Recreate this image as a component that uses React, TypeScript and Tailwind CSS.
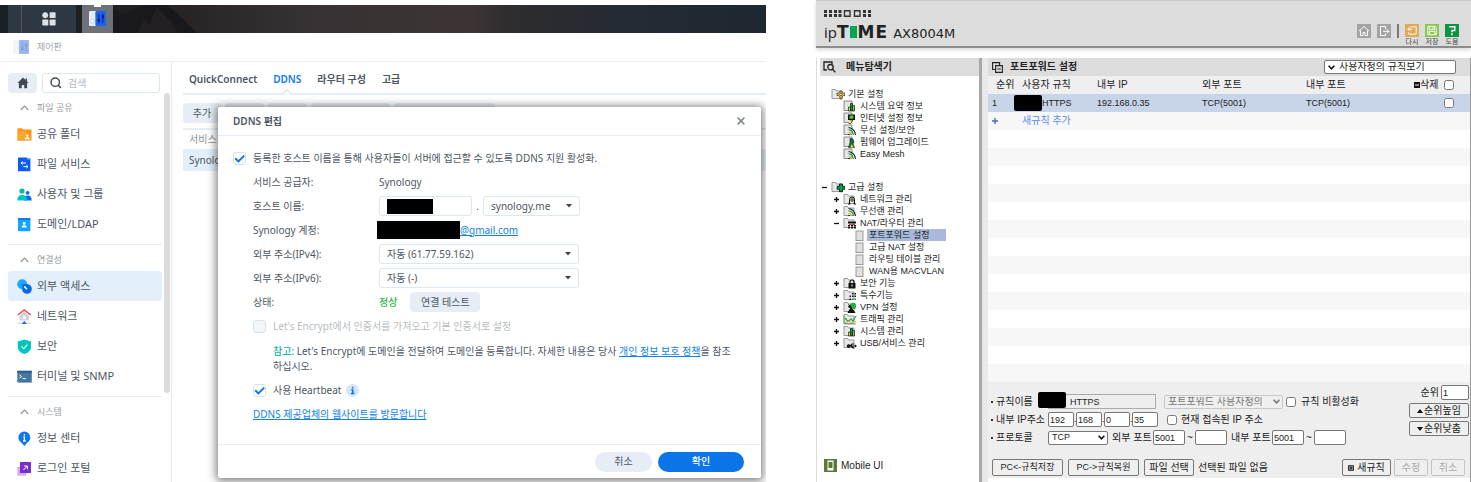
import React from "react";

type IconProps = { className?: string };

/* ---------- DSM icons ---------- */

const ControlPanelIcon = ({ className }: IconProps) => (
  <svg viewBox="0 0 16 16" className={className} aria-hidden="true">
    <rect x="0" y="1" width="8" height="14" rx="1" fill="#e4ecf8" />
    <rect x="6" y="1" width="10" height="14" rx="1" fill="#1b62f0" />
    <circle cx="3.2" cy="10.5" r="1.8" fill="#fff" stroke="#b6c3d6" strokeWidth="0.6" />
    <path d="M9.3 3.5v9M13 3.5v9" stroke="#0a2f9c" strokeWidth="1.2" />
    <rect x="8.2" y="8.5" width="2.2" height="2.2" fill="#0d1f66" />
    <rect x="11.9" y="5" width="2.2" height="2.2" fill="#0d1f66" />
  </svg>
);

const AppsIcon = ({ className }: IconProps) => (
  <svg viewBox="0 0 14 14" className={className} fill="#dde1e5" aria-hidden="true">
    <path d="M3.2 0 6.4 3.2 3.2 6.4 0 3.2z" />
    <rect x="0.6" y="0.6" width="5.2" height="5.2" rx="1.6" />
    <rect x="7.6" y="0.3" width="6" height="5.8" rx="0.6" />
    <rect x="0.3" y="7.6" width="6" height="5.8" rx="0.6" />
    <rect x="7.6" y="7.6" width="6" height="5.8" rx="0.6" />
  </svg>
);

const HomeIcon = ({ className }: IconProps) => (
  <svg viewBox="0 0 12 12" className={className} fill="#414b55" aria-hidden="true">
    <path d="M6 .6 .4 6h1.5v5.2h2.9V8h2.4v3.2h2.9V6h1.5L10 4.4V1.4H8.6v1.7z" />
  </svg>
);

const SearchIcon = ({ className }: IconProps) => (
  <svg viewBox="0 0 12 12" className={className} fill="none" stroke="#414b55" aria-hidden="true">
    <circle cx="5.2" cy="5.2" r="4.2" strokeWidth="1.4" />
    <path d="m8.3 8.3 2.6 2.6" strokeWidth="1.6" />
  </svg>
);

const FolderIcon = ({ className }: IconProps) => (
  <svg viewBox="0 0 15 15" className={className} aria-hidden="true">
    <path d="M.5 1.2h4.6l1.2 1.3h8.2V13.6H.5z" fill="#ff9416" />
    <path d="M.5 4h8.500V13.6H.5z" fill="#ffa62e" />
    <circle cx="10.4" cy="8.6" r="1.3" fill="#fff" />
    <path d="M7.8 12.2c0-1.6 1.2-2 2.6-2s2.6.4 2.6 2z" fill="#fff" />
  </svg>
);

const FileServiceIcon = ({ className }: IconProps) => (
  <svg viewBox="0 0 15 15" className={className} aria-hidden="true">
    <path d="M1 .6h8.6l1 1.600h2.800v12H1z" fill="#0a5cf5" />
    <path d="M10 1.2l3.400 0v1.600h-2.600z" fill="#0aa0ff" />
    <path d="M4 6h5M4 6l1.6-1.6M4 6l1.6 1.4M11 9.6H6.4M11 9.6 9.4 8.2M11 9.6 9.4 11" stroke="#fff" fill="none" />
  </svg>
);

const UsersIcon = ({ className }: IconProps) => (
  <svg viewBox="0 0 15 15" className={className} aria-hidden="true">
    <circle cx="10.6" cy="5.8" r="1.9" fill="#0a6cf5" />
    <path d="M7 13.4c0-3.6 1.6-4.8 3.8-4.8s3.8 1.2 3.8 4.8z" fill="#0a6cf5" />
    <circle cx="5" cy="4" r="2.6" fill="#00b8a5" />
    <path d="M.4 13.4c0-4 1.8-5.4 4.8-5.4S10 9.4 10 13.4z" fill="#00c5c0" />
  </svg>
);

const DomainIcon = ({ className }: IconProps) => (
  <svg viewBox="0 0 15 15" className={className} aria-hidden="true">
    <rect x="1" y="1.2" width="12.4" height="13" rx="0.6" fill="#12a4ff" />
    <rect x="1" y="1.2" width="12.4" height="1.6" fill="#0b6fe0" />
    <circle cx="7.2" cy="6.4" r="1.4" fill="#fff" />
    <path d="M4.6 10.6c0-2 1.2-2.4 2.6-2.4s2.6.4 2.6 2.4z" fill="#fff" />
  </svg>
);

const ExternalIcon = ({ className }: IconProps) => (
  <svg viewBox="0 0 15 15" className={className} aria-hidden="true">
    <circle cx="5.2" cy="5.2" r="5" fill="#19a9ff" />
    <path d="M5.400 5.200 10 5a5 5 0 0 1 4.800 5A4.800 4.800 0 0 1 10 14.800 5 5 0 0 1 5.200 11z" fill="#0667f2" />
    <path d="m7.200 7.4 2.800 2.800" stroke="#fff" strokeWidth="1.500" />
  </svg>
);

const NetworkIcon = ({ className }: IconProps) => (
  <svg viewBox="0 0 15 15" className={className} aria-hidden="true">
    <path d="M2.6 6.4 7.3 2.6 12 6.400V11.400H2.600z" fill="#cfd4da" />
    <rect x="5.8" y="7.2" width="3" height="3" fill="#fff" />
    <path d="m.8 6 6.500-5 6.500 5" fill="none" stroke="#f04a45" strokeWidth="1.500" />
    <path d="M.8 14.200h13" stroke="#cfd4da" strokeWidth="1.200" />
    <path d="M4.800 15 7.300 12 9.800 15z" fill="#0667f2" />
  </svg>
);

const ShieldIcon = ({ className }: IconProps) => (
  <svg viewBox="0 0 15 15" className={className} aria-hidden="true">
    <path d="M7.300.4 14 2.600V8c0 3.400-3 5.800-6.700 7C3.600 13.800.8 11.400.8 8V2.600z" fill="#00c4c0" />
    <path d="m4.400 7.400 2.200 2.200 3.800-4" fill="none" stroke="#fff" strokeWidth="1.100" />
  </svg>
);

const TerminalIcon = ({ className }: IconProps) => (
  <svg viewBox="0 0 15 15" className={className} aria-hidden="true">
    <rect x="0.300" y="1.800" width="14.500" height="11.800" fill="#4377a3" />
    <rect x="0.300" y="1.800" width="14.500" height="2" fill="#2f5f8a" />
    <path d="m2.400 5.800 2.200 1.700-2.200 1.700M5.400 9.600h3.400" fill="none" stroke="#fff" strokeWidth="1" />
  </svg>
);

const InfoPinIcon = ({ className }: IconProps) => (
  <svg viewBox="0 0 15 15" className={className} aria-hidden="true">
    <path d="M7.300.4a6 6 0 0 1 6 6c0 3.400-2.800 4.800-3.800 6L7.300 15 5.200 12.400c-1-1.200-3.800-2.600-3.800-6A6 6 0 0 1 7.300.4z" fill="#0a76f5" />
    <path d="M7.400 3v1.500M6.400 6h1v4M6 10h2.800" stroke="#fff" strokeWidth="1.300" fill="none" />
  </svg>
);

const LoginPortalIcon = ({ className }: IconProps) => (
  <svg viewBox="0 0 15 15" className={className} aria-hidden="true">
    <rect x="0.400" y="6" width="9" height="8.600" fill="#d8a8f5" />
    <rect x="3" y="1" width="11" height="11" fill="#7a2fc9" />
    <path d="m6.400 9 3.800-3.800M7.200 5h3.200v3.200" stroke="#fff" fill="none" />
  </svg>
);

const ChevronUp = ({ className }: IconProps) => (
  <svg viewBox="0 0 9 6" className={className} fill="none" stroke="#8b949d" strokeWidth="1.200" aria-hidden="true">
    <path d="M.8 5 4.500 1.200 8.200 5" />
  </svg>
);

/* ---------- DSM building blocks ---------- */

type MenuItem = { label: string; icon: (p: IconProps) => React.JSX.Element; active?: boolean };

const sections: { title: string; items: MenuItem[] }[] = [
  {
    title: "파일 공유",
    items: [
      { label: "공유 폴더", icon: FolderIcon },
      { label: "파일 서비스", icon: FileServiceIcon },
      { label: "사용자 및 그룹", icon: UsersIcon },
      { label: "도메인/LDAP", icon: DomainIcon },
    ],
  },
  {
    title: "연결성",
    items: [
      { label: "외부 액세스", icon: ExternalIcon, active: true },
      { label: "네트워크", icon: NetworkIcon },
      { label: "보안", icon: ShieldIcon },
      { label: "터미널 및 SNMP", icon: TerminalIcon },
    ],
  },
  {
    title: "시스템",
    items: [
      { label: "정보 센터", icon: InfoPinIcon },
      { label: "로그인 포털", icon: LoginPortalIcon },
    ],
  },
];

function Sidebar() {
  return (
    <aside className="flex w-[172px] shrink-0 border-r border-[#dfeaf2] pl-2 pt-[11px]">
      <div className="flex-1">
        <div className="flex gap-[5px]">
          <button aria-label="홈" className="grid h-5 w-[29px] shrink-0 place-items-center rounded-sm bg-[#e6edf4]">
            <HomeIcon className="size-3" />
          </button>
          <label className="flex h-5 w-[118px] shrink-0 items-center gap-1 rounded-[3px] border border-[#dce7f0] px-[7px]">
            <SearchIcon className="size-3 shrink-0" />
            <input
              aria-label="검색"
              placeholder="검색"
              className="w-full min-w-0 px-[2px] text-[10px] outline-none placeholder:text-[#b3b9bf]"
            />
          </label>
        </div>
        {sections.map((s, i) => (
          <section key={s.title} className={i === 0 ? "" : "mt-[5px] border-t border-[#e3ecf3]"}>
            <h2 className="flex h-[26px] items-center pl-3 pt-[3px] text-[9px] text-[#959ca3]">
              <ChevronUp className="mr-2 h-[6px] w-[9px]" />
              {s.title}
            </h2>
            {s.items.map(({ label, icon: Icon, active }) => (
              <a
                key={label}
                href="#"
                className={
                  active
                    ? "flex h-[30px] items-center gap-[5px] rounded-[3px] bg-[#e3effb] pl-[9px] text-[11px]"
                    : "flex h-[30px] items-center gap-[5px] pl-[9px] text-[11px]"
                }
              >
                <Icon className="size-[15px]" />
                {label}
              </a>
            ))}
          </section>
        ))}
      </div>
      <div className="mt-5 h-[300px] w-[9px] pl-[2px]">
        <div className="h-full w-[6px] rounded-full bg-[#dcdcdc]" />
      </div>
    </aside>
  );
}

function CheckBox({ id, checked, disabled }: { id: string; checked?: boolean; disabled?: boolean }) {
  return (
    <span className="grid size-[13px] shrink-0">
      <input
        id={id}
        type="checkbox"
        defaultChecked={checked}
        disabled={disabled}
        className="col-start-1 row-start-1 size-[13px] appearance-none rounded-[3px] border border-[#d5e2ee] bg-white disabled:bg-[#f3f6f9]"
      />
      {checked && (
        <svg viewBox="0 0 13 13" className="pointer-events-none col-start-1 row-start-1" fill="none">
          <path d="m2.200 6.300 3.200 3.100 5.800-5.800" stroke="#0a73e8" strokeWidth="1.900" />
        </svg>
      )}
    </span>
  );
}

function DsmSelect({ id, label, value, className }: { id: string; label: string; value: string; className: string }) {
  return (
    <span className={"grid " + className}>
      <select
        id={id}
        aria-label={label}
        className="col-start-1 row-start-1 h-5 w-full appearance-none rounded-[3px] border border-[#dce7f0] bg-white pl-[7px] text-[10px] text-[#4d565f]"
      >
        <option>{value}</option>
      </select>
      <svg viewBox="0 0 6 4" className="pointer-events-none col-start-1 row-start-1 mr-2 h-1 w-[6px] self-center justify-self-end">
        <path d="M0 0h6L3 3.600z" fill="#3d4650" />
      </svg>
    </span>
  );
}

function FormRow({ label, htmlFor, children }: { label: string; htmlFor?: string; children: React.ReactNode }) {
  return (
    <div className="flex h-6 items-center pl-5">
      <label htmlFor={htmlFor} className="w-[126px] shrink-0">
        {label}
      </label>
      {children}
    </div>
  );
}

function DdnsDialog() {
  return (
    <div
      role="dialog"
      aria-label="DDNS 편집"
      className="absolute left-[218px] right-[5px] top-[107px] rounded-[2px] bg-white text-[10px] shadow-[0_1px_9px_2px_rgba(0,0,0,0.5)]"
    >
      <header className="flex h-[29px] items-center justify-between border-b border-[#e6edf3] pl-[15px] pr-4">
        <h2 className="font-semibold">DDNS 편집</h2>
        <button aria-label="닫기" className="grid size-2">
          <svg viewBox="0 0 8 8" className="size-2" stroke="#828b94" strokeWidth="1.600">
            <path d="m.6.6 6.800 6.800M7.400.6.6 7.400" />
          </svg>
        </button>
      </header>
      <div className="pb-[18px] pl-[15px] pr-3 pt-[10px]">
        <div className="flex h-6 items-center gap-[7px]">
          <CheckBox id="ddns-enable" checked />
          <label htmlFor="ddns-enable">등록한 호스트 이름을 통해 사용자들이 서버에 접근할 수 있도록 DDNS 지원 활성화.</label>
        </div>
        <FormRow label="서비스 공급자:">Synology</FormRow>
        <FormRow label="호스트 이름:" htmlFor="hostname">
          <span className="grid w-[93px]">
            <input id="hostname" className="col-start-1 row-start-1 h-5 w-full rounded-[3px] border border-[#dce7f0] px-2" />
            <span className="col-start-1 row-start-1 ml-2 h-[15px] w-[46px] self-center bg-black" />
          </span>
          <span className="w-[11px] text-center">.</span>
          <DsmSelect id="domain" label="도메인" value="synology.me" className="w-[97px]" />
        </FormRow>
        <FormRow label="Synology 계정:">
          <span className="-ml-[2px] h-[18px] w-[83px] bg-black" />
          <a href="#" className="text-[#0f82e6] underline">
            @gmail.com
          </a>
        </FormRow>
        <FormRow label="외부 주소(IPv4):" htmlFor="ipv4">
          <DsmSelect id="ipv4" label="외부 주소(IPv4)" value="자동 (61.77.59.162)" className="w-[200px]" />
        </FormRow>
        <FormRow label="외부 주소(IPv6):" htmlFor="ipv6">
          <DsmSelect id="ipv6" label="외부 주소(IPv6)" value="자동 (-)" className="w-[200px]" />
        </FormRow>
        <FormRow label="상태:">
          <span className="font-medium text-[#1fb83a]">정상</span>
          <button className="ml-[13px] h-5 w-[70px] rounded-sm bg-[#e6edf4]">연결 테스트</button>
        </FormRow>
        <div className="flex h-6 items-center gap-[7px] pl-5 text-[#b7bcc1]">
          <CheckBox id="lets-encrypt" disabled />
          <label htmlFor="lets-encrypt">Let's Encrypt에서 인증서를 가져오고 기본 인증서로 설정</label>
        </div>
        <p className="mb-1 mt-[6px] pl-10 leading-[15px]">
          <span className="font-medium text-[#0fb5a5]">참고:</span> Let's Encrypt에 도메인을 전달하여 도메인을 등록합니다. 자세한 내용은 당사{" "}
          <a href="#" className="text-[#0f82e6] underline">
            개인 정보 보호 정책
          </a>
          을 참조
          <br />
          하십시오.
        </p>
        <div className="flex h-6 items-center gap-[7px] pl-5">
          <CheckBox id="heartbeat" checked />
          <label htmlFor="heartbeat">사용 Heartbeat</label>
          <svg viewBox="0 0 13 13" className="-ml-[2px] size-[13px]">
            <circle cx="6.500" cy="6.500" r="6.500" fill="#d3e7fb" />
            <path d="M6.600 2.800v1.700M5.200 5.900h1.500v3.500M5 9.500h3.400" stroke="#0a73e8" strokeWidth="1.500" fill="none" />
          </svg>
        </div>
        <div className="flex h-6 items-center pl-5">
          <a href="#" className="text-[#0f82e6] underline">
            DDNS 제공업체의 웹사이트를 방문합니다
          </a>
        </div>
      </div>
      <footer className="flex h-[34px] items-center justify-end gap-[6px] border-t border-[#e6edf3] pr-[17px]">
        <button className="h-5 w-[57px] rounded-full bg-[#e6edf4]">취소</button>
        <button className="h-5 w-[86px] rounded-full bg-[#0a74e8] font-medium text-white">확인</button>
      </footer>
    </div>
  );
}

function DsmWindow() {
  return (
    <section className="relative flex min-w-0 flex-[766] flex-col overflow-hidden pt-[5px] font-['Noto_Sans','Noto_Sans_CJK_KR',sans-serif] text-[10px] text-[#4d565f]">
      <div className="flex h-7 shrink-0 bg-[linear-gradient(90deg,#1a2027_0%,#1f1f22_16%,#2a2527_26%,#363133_40%,#3d3534_61%,#2e2c2f_67%,#252b32_80%,#1d2831_100%)] pl-2">
        <button aria-label="메인 메뉴" className="grid w-[68px] shrink-0 grid-cols-[14px_1fr] bg-[#2d3842]">
          <span className="h-full border-r border-[#505a63]" />
          <AppsIcon className="size-[14px] place-self-center" />
        </button>
        <button aria-label="제어판" className="ml-[6px] flex w-[31px] shrink-0 flex-col items-center bg-[#6c7278]">
          <span className="h-[2px] w-[7px] bg-white" />
          <ControlPanelIcon className="mt-[3px] size-[17px]" />
        </button>
        <svg viewBox="0 0 84 28" className="h-7 w-[84px]" aria-hidden="true">
          <path d="M0 4 10 9 22 3 36 0H54L66 10 84 28H0z" fill="#19191d" />
          <path d="m24 28 8-14 4 6 8-17 14 14 6 11z" fill="#232024" />
        </svg>
      </div>
      <header className="flex h-[29px] shrink-0 items-center gap-2 border-b border-[#eaeff3] pl-[13px] text-[9px] text-[#a3a8ad]">
        <ControlPanelIcon className="size-4 opacity-45" />
        <h1>제어판</h1>
      </header>
      <div className="flex flex-1">
        <Sidebar />
        <div className="min-w-0 flex-1 pl-[11px]">
          <nav className="flex h-[33px] items-center gap-4 border-b-2 border-[#e6eef5] pl-[6px] pt-1 text-[10px] font-semibold">
            <a href="#">QuickConnect</a>
            <a href="#" className="relative text-[#0a7cf0]">
              DDNS
              <svg viewBox="0 0 10 6" className="absolute -bottom-[8px] left-[9px] h-[6px] w-[10px]">
                <path d="M0 5.500 5 .8l5 4.700" fill="#fff" stroke="#dce7f0" strokeWidth="1.400" />
              </svg>
            </a>
            <a href="#">라우터 구성</a>
            <a href="#">고급</a>
          </nav>
          <div className="flex gap-1 pb-[5px] pt-2">
            <button className="h-5 w-[38px] rounded-sm bg-[#e6edf4]">추가</button>
            <span className="h-5 w-[39px] rounded-sm bg-[#e6edf4]" />
            <span className="h-5 w-[39px] rounded-sm bg-[#e6edf4]" />
            <span className="h-5 w-[79px] rounded-sm bg-[#e6edf4]" />
            <span className="h-5 w-[101px] rounded-sm bg-[#e6edf4]" />
          </div>
          <table className="w-full border-separate border-spacing-0 border-t-2 border-[#e6eef5] text-left">
            <thead>
              <tr className="h-[19px]">
                <th className="pl-[6px] font-normal text-[#8b939b]">서비스</th>
              </tr>
            </thead>
            <tbody>
              <tr className="h-[22px] bg-[#e3effb]">
                <td className="pl-[6px]">Synology</td>
              </tr>
            </tbody>
          </table>
        </div>
      </div>
      <DdnsDialog />
    </section>
  );
}

/* ---------- Router admin ---------- */

type Glyph =
  | "gear" | "bars" | "monitor" | "wifi" | "upgrade" | "plus" | "lan" | "nat"
  | "page" | "lock" | "grid" | "vpn" | "traffic" | "usb";

const glyphs: Record<Glyph, React.ReactNode> = {
  gear: (
    <g stroke="#333" strokeWidth="0.700">
      <path d="M9 3h2v1.500l1.500.5H14v2.500h-1.500L11 9v2H9V9L7.500 7.500H6V5h1.500L9 4.500z" fill="#f2b233" />
      <circle cx="10" cy="6.500" r="1.200" fill="#fff" />
    </g>
  ),
  plus: <path d="M8.500 3h3v2.300h2.200v3h-2.200v2.400h-3V8.300H6.200v-3h2.300z" fill="#00a33f" stroke="#111" strokeWidth="0.900" />,
  bars: (
    <g stroke="#111" strokeWidth="0.700">
      <path d="M5.500 7h2v4h-2z" fill="#f4e04a" />
      <path d="M7.500 3.500h2V11h-2z" fill="#00a33f" />
      <path d="M9.500 5.500h2V11h-2z" fill="#7bd04a" />
    </g>
  ),
  monitor: (
    <g>
      <rect x="5" y="2.500" width="7" height="5.500" fill="#111" />
      <rect x="6.500" y="3.500" width="4" height="3.200" fill="#5fc04a" />
      <path d="M7 8h3l-2 3.500H5.500" fill="#f4e04a" stroke="#111" strokeWidth="0.600" />
    </g>
  ),
  wifi: (
    <g fill="none" strokeWidth="1.100">
      <path d="M5.500 3.500a8 8 0 0 1 7 7.500" stroke="#222" />
      <path d="M5.500 5.700a5.500 5.500 0 0 1 4.800 5.300" stroke="#00a33f" />
      <path d="M5.500 8a3 3 0 0 1 2.600 3" stroke="#d8b92f" />
      <circle cx="6" cy="10.500" r="0.800" fill="#222" stroke="none" />
    </g>
  ),
  upgrade: (
    <g>
      <path d="M7 2.500 10 3l1 3-1 2 1.500 3.500h-6L7 7z" fill="#0b7a35" stroke="#111" strokeWidth="0.600" />
      <path d="m8.500 8 2 3.500h-3z" fill="#f4e04a" />
    </g>
  ),
  lan: (
    <g fill="none" stroke="#111">
      <path d="M6.500 11V6.500A2.500 2.500 0 0 1 9 4a2.500 2.500 0 0 1 2.500 2.500V11M5 11h2.500M10.500 11H13" />
      <circle cx="9" cy="7" r="1.300" fill="#e8b34a" strokeWidth="0.700" />
    </g>
  ),
  nat: (
    <g fill="#111">
      <path d="M5 4.500h8v2H5zM5 8h2v1H5zM8 8h2v1H8zM11 8h2v1h-2zM5 9.500h2v2H5zM8 9.500h2v2H8zM11 9.500h2v2h-2z" />
      <path d="M6 7h6v.8H6z" fill="#b03030" />
    </g>
  ),
  page: null,
  lock: (
    <g>
      <path d="M7 6V5a2 2 0 0 1 4 0v1" fill="none" stroke="#111" strokeWidth="1.200" />
      <rect x="5.500" y="6" width="7" height="5.500" fill="#111" />
      <path d="M9 7.500v2" stroke="#fff" />
    </g>
  ),
  grid: (
    <g fill="#111">
      <path d="M9 4h1.500v1.500H9zM11.500 4H13v1.500h-1.500zM6.500 6.500H8V8H6.500zM9 6.500h1.500V8H9zM11.500 6.500H13V8h-1.500zM6.500 9.500H8V11H6.500z" />
      <path d="M9 9.500h1.500V11H9zM11.500 9.500H13V11h-1.500z" fill="#00a33f" />
    </g>
  ),
  vpn: (
    <g>
      <circle cx="10" cy="5" r="3.200" fill="#22b04a" />
      <path d="m5.500 3.500 3 3.500M5 11.500l3-4.500 4 4.500z" fill="#111" stroke="#111" />
      <circle cx="6.800" cy="5.500" r="1.500" fill="#111" />
    </g>
  ),
  traffic: (
    <g fill="none">
      <path d="M1 2v9h12" stroke="#7da07d" />
      <path d="m2 5 3 3.500 3-2.500 2 2 3-5" stroke="#22a04a" strokeWidth="1.200" />
      <path d="m2 9.500 4-1 3 1 4-1" stroke="#e0a94a" />
    </g>
  ),
  usb: (
    <g stroke="#111" fill="none" strokeWidth="1.100">
      <path d="M5 9h8M7 9l2-2h2M8 9l2 2h1.500" />
      <circle cx="5.600" cy="9" r="1.300" fill="#111" />
      <path d="m12 7.500 2 1.500-2 1.500z" fill="#111" stroke="none" />
    </g>
  ),
};

function TreeIcon({ glyph, boxed }: { glyph: Glyph; boxed?: boolean }) {
  if (glyph === "page") {
    return (
      <svg viewBox="0 0 9 11" className="h-[11px] w-[9px] shrink-0">
        <rect x="1" y="1" width="7" height="9.500" fill="#e0e0e0" stroke="#999" />
      </svg>
    );
  }
  return (
    <svg viewBox="0 0 14 12" className="h-3 w-[14px] shrink-0">
      {boxed ? (
        <path d="M1 1h8v9.500H1z" fill="#e6e6e6" stroke="#888" />
      ) : (
        <path d="M1 1.500h3.500L5.500 3H11v7.500H1z" fill="#e8e8e8" stroke="#999" />
      )}
      {glyphs[glyph]}
    </svg>
  );
}

type Node = { label: string; glyph: Glyph; depth: 0 | 1 | 2; mark?: "+" | "-"; boxed?: boolean; active?: boolean };

const basicTree: Node[] = [
  { label: "기본 설정", glyph: "gear", depth: 0 },
  { label: "시스템 요약 정보", glyph: "bars", depth: 1, boxed: true },
  { label: "인터넷 설정 정보", glyph: "monitor", depth: 1, boxed: true },
  { label: "무선 설정/보안", glyph: "wifi", depth: 1, boxed: true },
  { label: "펌웨어 업그레이드", glyph: "upgrade", depth: 1, boxed: true },
  { label: "Easy Mesh", glyph: "wifi", depth: 1, boxed: true },
];

const advancedTree: Node[] = [
  { label: "고급 설정", glyph: "plus", depth: 0, mark: "-" },
  { label: "네트워크 관리", glyph: "lan", depth: 1, mark: "+" },
  { label: "무선랜 관리", glyph: "wifi", depth: 1, mark: "+" },
  { label: "NAT/라우터 관리", glyph: "nat", depth: 1, mark: "-" },
  { label: "포트포워드 설정", glyph: "page", depth: 2, active: true },
  { label: "고급 NAT 설정", glyph: "page", depth: 2 },
  { label: "라우팅 테이블 관리", glyph: "page", depth: 2 },
  { label: "WAN용 MACVLAN", glyph: "page", depth: 2 },
  { label: "보안 기능", glyph: "lock", depth: 1, mark: "+" },
  { label: "특수기능", glyph: "grid", depth: 1, mark: "+" },
  { label: "VPN 설정", glyph: "vpn", depth: 1, mark: "+" },
  { label: "트래픽 관리", glyph: "traffic", depth: 1, mark: "+" },
  { label: "시스템 관리", glyph: "bars", depth: 1, mark: "+" },
  { label: "USB/서비스 관리", glyph: "usb", depth: 1, mark: "+" },
];

const indent = { 0: "pl-[2px]", 1: "pl-[14px]", 2: "pl-[26px]" };

function Tree({ nodes }: { nodes: Node[] }) {
  return (
    <ul className="text-[9px] leading-3">
      {nodes.map((n) => (
        <li key={n.label} className={"flex h-3 items-center " + indent[n.depth]}>
          <span className="flex w-[9px] shrink-0">
            {n.mark && (
              <svg viewBox="0 0 5 5" className="size-[5px]" stroke="#111" strokeWidth="1.300">
                <path d={n.mark === "+" ? "M0 2.500h5M2.500 0v5" : "M0 2.500h5"} />
              </svg>
            )}
          </span>
          <TreeIcon glyph={n.glyph} boxed={n.boxed} />
          <a
            href="#"
            className={
              n.active
                ? "ml-[3px] w-[79px] whitespace-nowrap bg-[#a9b9dc] pl-[2px]"
                : n.depth === 2
                  ? "whitespace-nowrap pl-[5px]"
                  : "whitespace-nowrap pl-[3px]"
            }
          >
            {n.label}
          </a>
        </li>
      ))}
    </ul>
  );
}

function ToolButton({ label, color, children }: { label?: string; color: string; children: React.ReactNode }) {
  return (
    <button className="flex w-[14px] flex-col items-center gap-px whitespace-nowrap text-[7px] leading-[8px] text-[#444]">
      <svg viewBox="0 0 14 14" className={"size-[14px] " + color} fill="none" stroke="#fff" strokeWidth="1">
        {children}
      </svg>
      {label}
    </button>
  );
}

function RouterHeader() {
  return (
    <header className="flex h-12 shrink-0 justify-between border-b-2 border-t border-b-[#8c8c8c] border-t-[#c8c8c8] bg-[#dcdcdc] pl-2 pr-3 shadow-[0_2px_4px_rgba(0,0,0,0.15)]">
      <div className="pt-[9px]">
        <svg viewBox="0 0 48 7" className="h-[7px] w-12" fill="#333" aria-hidden="true">
          <path d="M0 0h3v3H0zM5 0h3v3H5zM10 0h3v3h-3zM14.500 0h3v3h-3zM0 4h3v3H0zM5 4h3v3H5zM10 4h3v3h-3zM14.500 4h3v3h-3zM39 0h3v3h-3zM44 0h3v3h-3zM39 4h3v3h-3zM44 4h3v3h-3z" />
          <path d="M20.500.8h5.500v5.500h-5.500zM30.500.8H36v5.500h-5.500z" fill="none" stroke="#333" strokeWidth="1.400" />
        </svg>
        <div className="mt-1 flex items-baseline font-['DejaVu_Sans',sans-serif] leading-[22px] text-[#222]">
          <span className="font-['Open_Sans',sans-serif] text-[15px]">ip</span>
          <span className="flex items-baseline gap-px text-[17px] font-bold">
            <span>T</span>
            <svg viewBox="0 0 7 12" className="h-3 w-[7px]" role="img" aria-label="I">
              <rect width="7" height="12" fill="#00a651" />
            </svg>
            <span>M</span>
            <span>E</span>
          </span>
          <span className="ml-[6px] text-[13px]">AX8004M</span>
        </div>
      </div>
      <div className="flex gap-[6px] pt-[23px]">
        <ToolButton color="bg-[#a3a3a3]">
          <path d="m2 7 5-4.500L12 7M3.500 6.500v5h2.500V8.500h2v3h2.500v-5" />
        </ToolButton>
        <ToolButton color="bg-[#a3a3a3]">
          <path d="M8.500 5V2.500h-5v9h5V9.500M6 7.300h6M10 5.300l2 2-2 2" />
        </ToolButton>
        <span className="h-[14px] w-[2px] bg-[#777]" />
        <ToolButton color="bg-[#dfab58]" label="다시">
          <path d="M5 3h6.500v8H3.500V9M2.500 5.500h5M4.500 3.500l-2 2 2 2" />
        </ToolButton>
        <ToolButton color="bg-[#8cc850]" label="저장">
          <path d="M2.500 2.500h8l1 1v8h-9zM4.500 2.500v3.500h5V2.500M4 11.500v-3.500h6v3.500M8 3v2" />
        </ToolButton>
        <ToolButton color="bg-[#0a9444]" label="도움">
          <path d="M4 3h6v4H7v2M7 10v2" strokeWidth="1.500" />
        </ToolButton>
      </div>
    </header>
  );
}

const btnBase =
  "shrink-0 whitespace-nowrap rounded-[2px] border border-[#777] bg-[#efefef] leading-none disabled:border-[#c4c4c4] disabled:text-[#aaa]";
const btn = btnBase + " h-[17px]";
const orderBtn = btnBase + " flex h-[15px] w-[60px] items-center justify-center gap-px text-[10px]";
const box = "h-[15px] shrink-0 rounded-[2px] border border-[#777] bg-white px-px text-[9px]";

function RouterSelect({ label, value, className, size, disabled }: { label: string; value: string; className: string; size: string; disabled?: boolean }) {
  return (
    <span className={"grid shrink-0 " + className}>
      <select
        aria-label={label}
        disabled={disabled}
        className={
          "col-start-1 row-start-1 h-[14px] w-full appearance-none rounded-[2px] border border-[#777] bg-white pl-[3px] leading-none disabled:border-[#c8c8c8] disabled:bg-[#efefef] disabled:text-[#777] disabled:opacity-100 " +
          size
        }
      >
        <option>{value}</option>
      </select>
      <svg viewBox="0 0 7 5" className="pointer-events-none col-start-1 row-start-1 mr-[3px] h-[5px] w-[7px] self-center justify-self-end" fill="none" stroke={disabled ? "#777" : "#111"} strokeWidth="1.600">
        <path d="m.6.8 2.900 3 2.900-3" />
      </svg>
    </span>
  );
}

function FieldLabel({ children }: { children: React.ReactNode }) {
  return (
    <span className="flex w-[57px] shrink-0 items-center gap-[3px] whitespace-nowrap">
      <span className="size-[2px] bg-[#333]" />
      {children}
    </span>
  );
}

function RuleForm() {
  return (
    <form className="bg-[#eeeeee] pb-[2px] pl-[3px] pr-px pt-[3px] text-[10px] leading-none">
      <div className="flex justify-between">
        <div className="flex flex-col gap-[3px] pt-[9px]">
          <div className="flex h-[15px] items-center">
            <FieldLabel>규칙이름</FieldLabel>
            <span className="grid shrink-0">
              <input aria-label="규칙이름" defaultValue="HTTPS" className="col-start-1 row-start-1 h-[15px] w-[108px] border border-[#aaa] bg-[#eee] pl-[21px] text-[9px]" />
              <span className="z-10 col-start-1 row-start-1 -ml-[10px] -mt-[2px] h-4 w-7 rounded-[2px] bg-black" />
            </span>
            <RouterSelect label="규칙 종류" value="포트포워드 사용자정의" className="ml-2 w-[119px]" size="text-[10px]" disabled />
            <input id="rule-off" type="checkbox" className="ml-[3px] size-[10px]" />
            <label htmlFor="rule-off" className="ml-[5px] whitespace-nowrap">
              규칙 비활성화
            </label>
          </div>
          <div className="flex h-[15px] items-center">
            <FieldLabel>내부 IP주소</FieldLabel>
            {["192", "168", "0", "35"].map((v, i) => (
              <React.Fragment key={v}>
                {i > 0 && <span className="w-[2px] text-[9px]">.</span>}
                <input aria-label={"내부 IP주소 " + (i + 1)} defaultValue={v} className={box + " w-[26px]"} />
              </React.Fragment>
            ))}
            <input id="current-ip" type="checkbox" className="ml-[9px] size-[10px]" />
            <label htmlFor="current-ip" className="ml-[4px] whitespace-nowrap">
              현재 접속된 IP 주소
            </label>
          </div>
          <div className="flex h-[15px] items-center whitespace-nowrap">
            <FieldLabel>프로토콜</FieldLabel>
            <RouterSelect label="프로토콜" value="TCP" className="w-[60px]" size="text-[9px]" />
            <span className="ml-1 w-[41px]">외부 포트</span>
            <input aria-label="외부 포트 시작" defaultValue="5001" className={box + " w-8"} />
            <span className="w-[10px] text-center">~</span>
            <input aria-label="외부 포트 끝" className={box + " w-8"} />
            <span className="ml-1 w-[41px]">내부 포트</span>
            <input aria-label="내부 포트 시작" defaultValue="5001" className={box + " w-8"} />
            <span className="w-[10px] text-center">~</span>
            <input aria-label="내부 포트 끝" className={box + " w-8"} />
          </div>
        </div>
        <div className="flex flex-col items-end">
          <label className="flex items-center gap-[2px]">
            순위
            <input defaultValue="1" className={box + " w-7"} />
          </label>
          <button type="button" className={orderBtn + " mt-[3px]"}>
            <svg viewBox="0 0 6 4" className="h-1 w-[6px]"><path d="M0 4h6L3 0z" fill="#111" /></svg>
            순위높임
          </button>
          <button type="button" className={orderBtn + " mt-[3px]"}>
            <svg viewBox="0 0 6 4" className="h-1 w-[6px]"><path d="M0 0h6L3 4z" fill="#111" /></svg>
            순위낮춤
          </button>
        </div>
      </div>
      <div className="mt-[14px] flex items-center gap-[5px] pl-px pr-1">
        <button type="button" className={btn + " w-[71px] text-[9px]"}>PC&lt;-규칙저장</button>
        <button type="button" className={btn + " w-[71px] text-[9px]"}>PC-&gt;규칙복원</button>
        <button type="button" className={btn + " w-[50px] text-[10px]"}>파일 선택</button>
        <span className="-ml-px whitespace-nowrap">선택된 파일 없음</span>
        <span className="ml-auto flex gap-[3px]">
          <button type="button" className={btn + " flex w-[49px] items-center justify-center gap-[3px] text-[10px]"}>
            <svg viewBox="0 0 6 6" className="size-[6px] shrink-0"><path d="M.7.7h4.600v4.600H.7zM3 1.500v3M1.500 3h3" fill="none" stroke="#111" strokeWidth="1.100" /></svg>
            새규칙
          </button>
          <button type="button" disabled className={btn + " w-[34px] text-[10px]"}>수정</button>
          <button type="button" disabled className={btn + " w-[34px] text-[10px]"}>취소</button>
        </span>
      </div>
    </form>
  );
}

const emptyRows = Array.from({ length: 14 }, (_, i) => i);

function RouterAdmin() {
  return (
    <section className="flex min-w-0 flex-[655] flex-col font-['Liberation_Sans','Noto_Sans_CJK_KR',sans-serif] text-[10px] leading-none text-[#222]">
      <RouterHeader />
      <div className="flex flex-1 pt-[10px]">
        <nav className="flex w-[166px] shrink-0 flex-col border-l border-r-[3px] border-l-[#dcdcdc] border-r-[#a8a8a8] pl-[3px]">
          <h2 className="flex h-[18px] items-center gap-[10px] bg-[#dcdcdc] pl-[3px] font-bold">
            <svg viewBox="0 0 13 12" className="h-3 w-[13px]" fill="none" stroke="#222" strokeWidth="1.300" aria-hidden="true">
              <path d="M4 9H1V1h8v2" />
              <circle cx="7.500" cy="6.200" r="2.700" />
              <path d="m9.500 8.200 2.800 3" />
            </svg>
            메뉴탐색기
          </h2>
          <div className="pt-3">
            <Tree nodes={basicTree} />
            <div className="h-[21px]" />
            <Tree nodes={advancedTree} />
          </div>
          <a href="#" className="mb-[11px] mt-auto flex items-center gap-1 pl-1 text-[10px]">
            <svg viewBox="0 0 13 13" className="size-[13px]">
              <rect width="13" height="13" fill="#5b7a3a" />
              <rect x="3.500" y="1.500" width="6" height="10" fill="#fff" />
              <rect x="4.500" y="3" width="4" height="6" fill="#5b7a3a" />
            </svg>
            Mobile UI
          </a>
        </nav>
        <div className="w-[6px] shrink-0 bg-[#e9e9e9]" />
        <main className="min-w-0 flex-1 border-r border-[#999]">
          <div className="flex h-[18px] items-center justify-between bg-[#dcdcdc] pl-1 pr-[14px]">
            <h2 className="flex items-center gap-[7px] font-bold">
              <svg viewBox="0 0 11 11" className="size-[11px]" fill="none" stroke="#222" strokeWidth="1.100" aria-hidden="true">
                <path d="M3 7.500H.6V.6h7v2.600" />
                <path d="M3.600 3.600h6.800v6.800H3.600zM5.300 7h3.500" />
              </svg>
              포트포워드 설정
            </h2>
            <span className="grid w-[132px]">
              <select aria-label="규칙 보기" className="col-start-1 row-start-1 h-[14px] appearance-none rounded-[2px] border border-[#777] bg-white pl-[14px] text-[10px] leading-none">
                <option>사용자정의 규칙보기</option>
              </select>
              <svg viewBox="0 0 7 5" className="pointer-events-none col-start-1 row-start-1 ml-1 h-[5px] w-[7px] self-center" fill="none" stroke="#111" strokeWidth="1.600">
                <path d="m.6.8 2.900 3 2.900-3" />
              </svg>
            </span>
          </div>
          <table className="w-full table-fixed text-left">
            <colgroup>
              <col className="w-[26px]" />
              <col className="w-[83px]" />
              <col className="w-[105px]" />
              <col className="w-[104px]" />
              <col />
              <col className="w-[56px]" />
            </colgroup>
            <thead>
              <tr className="h-[18px] whitespace-nowrap bg-[#efefef]">
                <th className="pl-2 font-normal">순위</th>
                <th className="pl-2 font-normal">사용자 규칙</th>
                <th className="font-normal">내부 IP</th>
                <th className="font-normal">외부 포트</th>
                <th className="font-normal">내부 포트</th>
                <th className="font-normal">
                  <label className="flex items-center">
                    <svg viewBox="0 0 6 6" className="size-[6px]"><rect width="6" height="6" fill="#111" /><path d="M1 3h4" stroke="#fff" /></svg>
                    삭제
                    <input type="checkbox" className="ml-[6px] size-[10px]" />
                  </label>
                </th>
              </tr>
            </thead>
            <tbody className="text-[9px]">
              <tr className="h-[18px] bg-[#c8d4e8]">
                <td className="pl-1">1</td>
                <td>
                  <span className="flex items-center">
                    <span className="h-4 w-7 rounded-[2px] bg-black" />
                    HTTPS
                  </span>
                </td>
                <td>192.168.0.35</td>
                <td>TCP(5001)</td>
                <td>TCP(5001)</td>
                <td>
                  <input type="checkbox" aria-label="규칙 1 삭제" className="ml-[30px] block size-[10px]" />
                </td>
              </tr>
              <tr className="h-[18px] bg-[#f7f7f7] text-[10px] text-[#5b8cf5]">
                <td className="pl-1">
                  <svg viewBox="0 0 6 6" className="size-[6px]" stroke="#3f6fc4" strokeWidth="1.400"><path d="M0 3h6M3 0v6" /></svg>
                </td>
                <td className="pl-2">
                  <a href="#">새규칙 추가</a>
                </td>
                <td colSpan={4} />
              </tr>
              {emptyRows.map((i) => (
                <tr key={i} className="h-[18px] even:bg-[#f7f7f7] odd:bg-white">
                  <td colSpan={6} />
                </tr>
              ))}
            </tbody>
          </table>
          <RuleForm />
        </main>
      </div>
    </section>
  );
}

export default function App() {
  return (
    <div className="flex gap-[50px] overflow-hidden bg-white">
      <DsmWindow />
      <RouterAdmin />
    </div>
  );
}
